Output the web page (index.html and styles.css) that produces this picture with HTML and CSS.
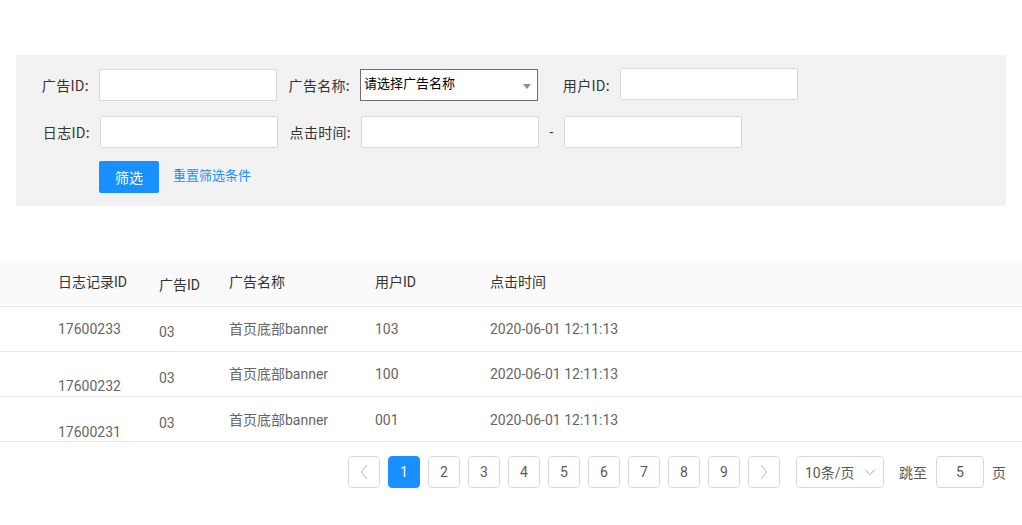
FILE: index.html
```html
<!DOCTYPE html>
<html lang="zh-CN">
<head>
<meta charset="utf-8">
<title>点击日志</title>
<link rel="stylesheet" href="styles.css">
</head>
<body>
<div class="filter">
  <div class="frow">
    <span class="lab w83">广告ID:</span><span class="inp"></span>
    <span class="lab w83">广告名称:</span>
    <div class="sel"><span>请选择广告名称</span><span class="tri"></span></div>
    <span class="lab w82">用户ID:</span><span class="inp up"></span>
  </div>
  <div class="frow">
    <span class="lab w84">日志ID:</span><span class="inp"></span>
    <span class="lab w83">点击时间:</span><span class="inp"></span>
    <span class="dash">-</span><span class="inp"></span>
  </div>
  <div class="frow btns">
    <button class="btn">筛选</button>
    <a class="link" href="#">重置筛选条件</a>
  </div>
</div>

<div class="table">
  <div class="thead">
    <div class="th">日志记录ID</div>
    <div class="th th-low">广告ID</div>
    <div class="th">广告名称</div>
    <div class="th">用户ID</div>
    <div class="th">点击时间</div>
  </div>
  <div class="tr">
    <div class="td">17600233</div>
    <div class="td d3">03</div>
    <div class="td">首页底部banner</div>
    <div class="td">103</div>
    <div class="td">2020-06-01 12:11:13</div>
  </div>
  <div class="tr">
    <div class="td d12">17600232</div>
    <div class="td d4">03</div>
    <div class="td">首页底部banner</div>
    <div class="td">100</div>
    <div class="td">2020-06-01 12:11:13</div>
  </div>
  <div class="tr">
    <div class="td d13">17600231</div>
    <div class="td d4">03</div>
    <div class="td d1">首页底部banner</div>
    <div class="td d1">001</div>
    <div class="td d1">2020-06-01 12:11:13</div>
  </div>
</div>

<div class="pager">
  <span class="pg arrow"><svg width="10" height="16" viewBox="0 0 10 16"><path d="M8 1 L2 8 L8 15" fill="none" stroke="#b5b5b5" stroke-width="1"/></svg></span>
  <span class="pg active">1</span>
  <span class="pg">2</span>
  <span class="pg">3</span>
  <span class="pg">4</span>
  <span class="pg">5</span>
  <span class="pg">6</span>
  <span class="pg">7</span>
  <span class="pg">8</span>
  <span class="pg">9</span>
  <span class="pg arrow"><svg width="10" height="16" viewBox="0 0 10 16"><path d="M2 1 L8 8 L2 15" fill="none" stroke="#b5b5b5" stroke-width="1"/></svg></span>
  <span class="size">10条/页<svg class="chev" width="12" height="8" viewBox="0 0 12 8"><path d="M1 1.5 L6 6.5 L11 1.5" fill="none" stroke="#a8a8a8" stroke-width="1"/></svg></span>
  <span class="jump">跳至</span>
  <span class="jinp">5</span>
  <span class="page-t">页</span>
</div>
</body>
</html>
```

FILE: styles.css
```css
* { box-sizing: border-box; }
body {
  margin: 0;
  font-family: Roboto, "Noto Sans CJK SC", sans-serif;
  font-size: 14px;
  color: #333;
  background: #fff;
}
.filter {
  margin: 55px 16px 0 16px;
  background: #f2f2f2;
  padding: 14px 0 13px 0;
}
.frow {
  display: flex;
  align-items: center;
  height: 32px;
}
.frow + .frow { margin-top: 15px; }
.frow.btns { margin-top: 13px; padding-left: 83px; }
.lab {
  text-align: right;
  padding-right: 10px;
  color: #333;
  font-family: "Noto Sans CJK SC", sans-serif;
  font-size: 14px;
  letter-spacing: 0.3px;
  white-space: nowrap;
}
.w82 { width: 82px; }
.w83 { width: 83px; }
.w84 { width: 84px; }
.inp {
  display: block;
  width: 178px;
  height: 32px;
  background: #fff;
  border: 1px solid #d9d9d9;
  border-radius: 2px;
}
.inp.up { margin-top: -2px; }
.sel {
  width: 178px;
  height: 32px;
  background: #fff;
  border: 1px solid #6e6e6e;
  display: flex;
  align-items: center;
  justify-content: space-between;
  padding: 0 6px 0 3px;
  color: #000;
  font-family: "Noto Sans CJK SC", sans-serif;
  font-size: 13px;
}
.sel span:first-child { margin-top: -5px; }
.tri {
  width: 0;
  height: 0;
  border-left: 4.5px solid transparent;
  border-right: 4.5px solid transparent;
  border-top: 5px solid #8c8c8c;
  margin-top: 2px;
}
.dash {
  width: 25px;
  text-align: center;
  color: #333;
}
.btn {
  width: 60px;
  height: 32px;
  border: none;
  border-radius: 2px;
  background: #1890ff;
  color: #fff;
  font-family: "Noto Sans CJK SC", sans-serif;
  font-size: 14px;
  padding: 0;
}
.link {
  margin-left: 14px;
  color: #1890ff;
  text-decoration: none;
  font-family: "Noto Sans CJK SC", sans-serif;
  font-size: 13px;
  margin-top: -5px;
}

.table { margin-top: 55px; }
.thead, .tr {
  display: grid;
  grid-template-columns: 101px 70px 146px 115px 1fr;
  padding-left: 58px;
  border-bottom: 1px solid #e8e8e8;
}
.thead {
  height: 46px;
  background: #fafafa;
}
.tr { height: 45px; }
.th {
  padding-top: 11px;
  line-height: 20px;
  color: #333;
  white-space: nowrap;
}
.th-low { padding-top: 14px; }
.td {
  padding-top: 12px;
  line-height: 20px;
  color: #666;
  white-space: nowrap;
}
.td.d1 { padding-top: 13px; }
.td.d3 { padding-top: 15px; }
.td.d4 { padding-top: 16px; }
.td.d12 { padding-top: 24px; }
.td.d13 { padding-top: 25px; }

.pager {
  display: flex;
  justify-content: flex-end;
  align-items: center;
  gap: 8px;
  margin-top: 14px;
  padding-right: 16px;
}
.pg {
  width: 32px;
  height: 32px;
  border: 1px solid #d9d9d9;
  border-radius: 4px;
  display: flex;
  align-items: center;
  justify-content: center;
  color: #595959;
  font-size: 14px;
  background: #fff;
}
.pg.active {
  background: #1890ff;
  border-color: #1890ff;
  color: #fff;
}
.size {
  margin-left: 8px;
  width: 88px;
  height: 32px;
  border: 1px solid #d9d9d9;
  border-radius: 4px;
  display: flex;
  align-items: center;
  padding-left: 8px;
  color: #595959;
  white-space: nowrap;
}
.chev { margin-left: 9px; }
.jump {
  margin-left: 7px;
  color: #595959;
}
.jinp {
  margin-left: 1px;
  width: 48px;
  height: 32px;
  border: 1px solid #d9d9d9;
  border-radius: 4px;
  display: flex;
  align-items: center;
  justify-content: center;
  color: #595959;
}
.page-t { color: #595959; }
```
